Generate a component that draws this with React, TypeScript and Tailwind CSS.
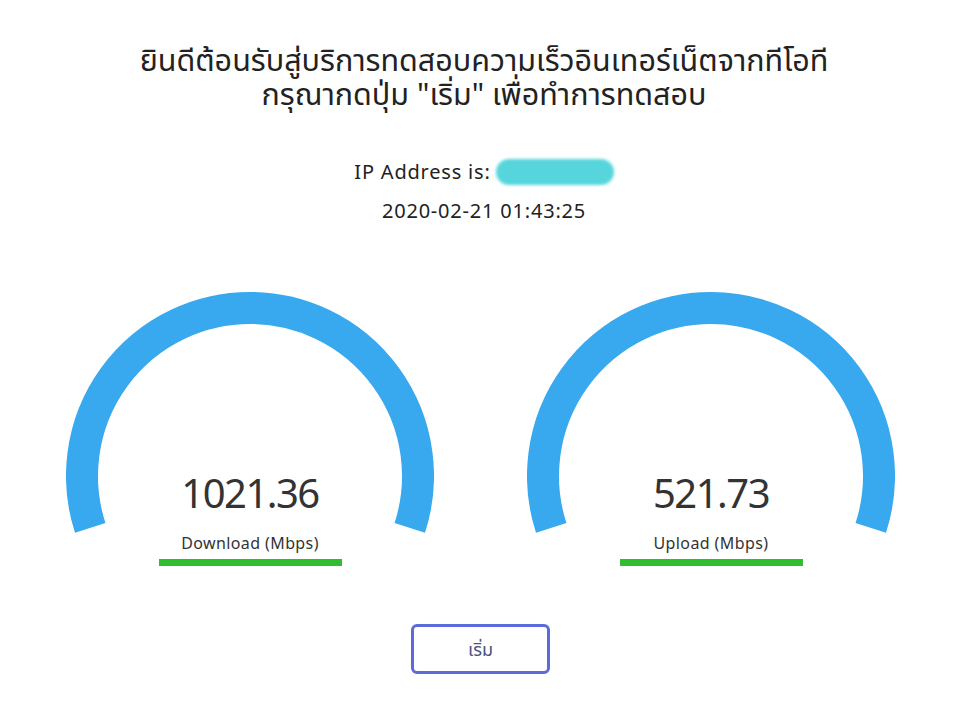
import React from 'react'

const font = { fontFamily: '"Noto Sans", "Noto Sans Thai", sans-serif' }

function Gauge({ value, label }: { value: string; label: string }) {
  // arc 198deg -> -18deg over the top, r=168, stroke 32
  const cx = 184
  const cy = 184
  const r = 168
  const a0 = (198 * Math.PI) / 180
  const a1 = (-18 * Math.PI) / 180
  const x0 = cx + r * Math.cos(a0)
  const y0 = cy - r * Math.sin(a0)
  const x1 = cx + r * Math.cos(a1)
  const y1 = cy - r * Math.sin(a1)

  return (
    <div className="flex w-[461px] flex-col items-center">
      <div className="relative h-[242px] w-[368px]">
        <svg width="368" height="242" viewBox="0 0 368 242">
          <path
            d={`M ${x0} ${y0} A ${r} ${r} 0 1 1 ${x1} ${y1}`}
            fill="none"
            stroke="#38a8ef"
            strokeWidth="32"
          />
        </svg>
        <div className="absolute inset-x-0 bottom-[17px] text-center text-[40px] leading-[48px] tracking-[-1.5px] text-[#333333]">
          {value}
        </div>
      </div>
      <div className="mt-[-1px] text-[16px] leading-[20px] tracking-[0.4px] text-[#333333]">{label}</div>
      <div className="mt-[6px] h-[7px] w-[183px] bg-[#2fbe2f]" />
    </div>
  )
}

export default function App() {
  return (
    <div className="min-h-[708px] w-full bg-white" style={font}>
      <div className="flex flex-col items-center pt-[42px]">
        <h1 className="text-center text-[30.5px] leading-[34px] font-normal text-[#222222]">
          ยินดีต้อนรับสู่บริการทดสอบความเร็วอินเทอร์เน็ตจากทีโอที
          <br />
          กรุณากดปุ่ม "เริ่ม" เพื่อทำการทดสอบ
        </h1>

        <div className="mt-[48px] flex h-[28px] items-center gap-[5px] text-[20px] tracking-[0.8px] text-[#222222]">
          <span>IP Address is:</span>
          <span className="inline-block h-[26px] w-[118px] rounded-full bg-[#56d6dc] blur-[1.5px]" />
        </div>
        <div className="mt-[11px] h-[28px] text-[20px] leading-[28px] tracking-[0.8px] text-[#222222]">
          2020-02-21 01:43:25
        </div>

        <div className="mt-[67px] flex justify-center pr-[7px]">
          <Gauge value="1021.36" label="Download (Mbps)" />
          <Gauge value="521.73" label="Upload (Mbps)" />
        </div>

        <button className="mr-[7px] mt-[58px] flex h-[50px] w-[139px] items-center justify-center rounded-md border-[3px] border-[#5c6bd9] bg-white text-[18px] text-[#4b5280]">
          เริ่ม
        </button>
      </div>
    </div>
  )
}
